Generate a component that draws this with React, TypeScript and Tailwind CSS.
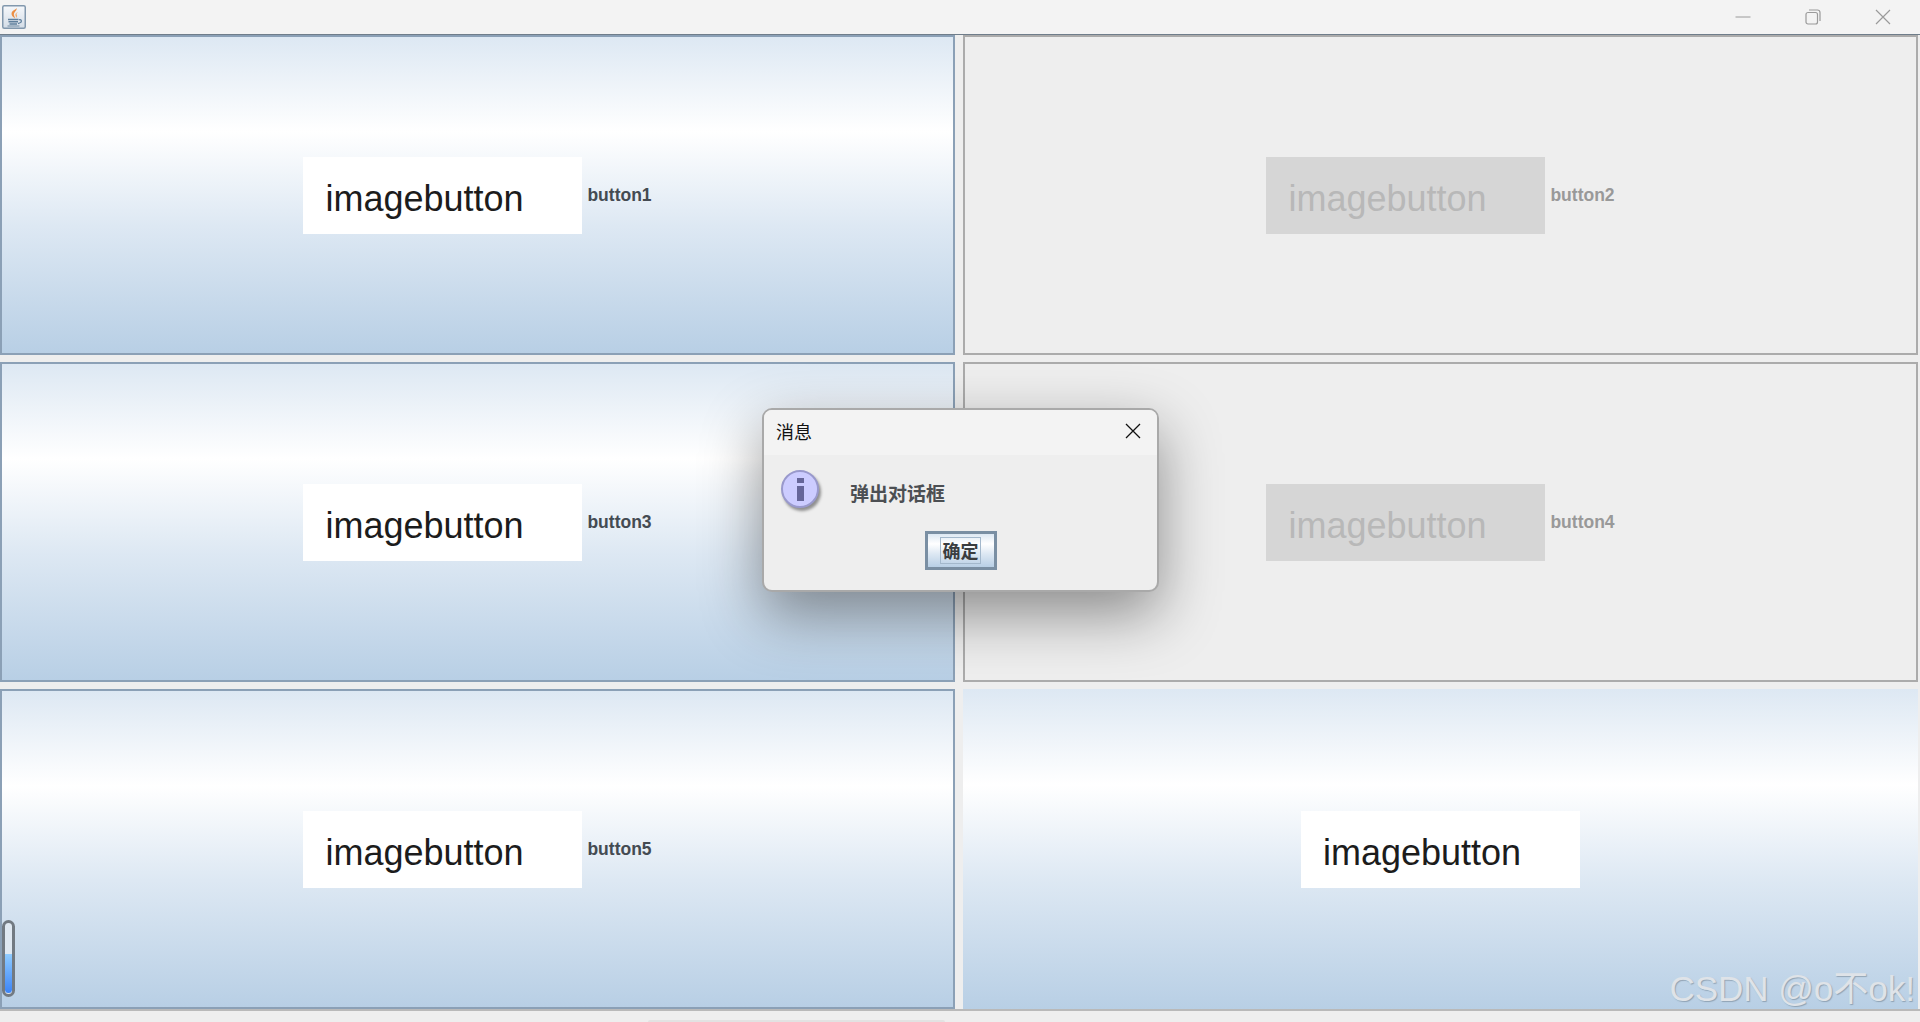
const CJK = "font-['Noto_Sans_CJK_SC',sans-serif]";

function JavaIcon() {
  return (
    <svg width="24" height="24" viewBox="0 0 24 24">
      <defs>
        <linearGradient id="frame" x1="0" y1="0" x2="0" y2="1">
          <stop offset="0" stopColor="#f6f8fb" />
          <stop offset="1" stopColor="#d3dce6" />
        </linearGradient>
      </defs>
      <rect x="0.75" y="0.75" width="22.5" height="22.5" rx="1.5" fill="url(#frame)" stroke="#8298ad" strokeWidth="1.5" />
      <path d="M14.500 3c1 2.800-3.600 4.400-2.400 7.400.3.900.7 1.800 1 3-3.400-1.800-4.400-4.600-2.800-6.800C11.500 5 14 4.800 14.500 3z" fill="#ec8f45" />
      <path d="M16 7c-2.200 1-3.200 2.200-2.400 3.800.3.700.5 1.400.4 2.200 1.400-1 1.400-2.400.7-3.400-.5-.9.300-1.600 1.300-2.600z" fill="#f2ab70" />
      <path d="M6 14.500h10.500M6.500 16.800h9.500M7.500 19h7.500" stroke="#5f7f9c" strokeWidth="1.400" fill="none" />
      <path d="M17 14.800c2.500-.6 3.500 1.800 1 3l-2 .8" stroke="#5f7f9c" strokeWidth="1.200" fill="none" />
      <path d="M5.500 21h12" stroke="#7f98ae" strokeWidth="1.200" />
    </svg>
  );
}

function WindowControls() {
  return (
    <div className="flex h-full items-center pr-[2px]">
      <div className="flex h-full w-[70px] items-center justify-center">
        <svg width="16" height="16" viewBox="0 0 16 16">
          <path d="M0.500 8h15" stroke="#9a9a9a" strokeWidth="1" />
        </svg>
      </div>
      <div className="flex h-full w-[70px] items-center justify-center">
        <svg width="16" height="16" viewBox="0 0 16 16" fill="none">
          <rect x="1" y="3.500" width="11.500" height="11.500" rx="2" stroke="#9a9a9a" strokeWidth="1.200" />
          <path d="M4 1h8.500A2.500 2.500 0 0 1 15 3.500V12" stroke="#9a9a9a" strokeWidth="1.200" />
        </svg>
      </div>
      <div className="flex h-full w-[70px] items-center justify-center">
        <svg width="16" height="16" viewBox="0 0 16 16">
          <path d="M1 1l14 14M15 1L1 15" stroke="#9a9a9a" strokeWidth="1.200" />
        </svg>
      </div>
    </div>
  );
}

function Cell({ label, disabled, bare }: { label?: string; disabled?: boolean; bare?: boolean }) {
  const surface = disabled
    ? "border-2 border-[#ababab] bg-[#eeeeee]"
    : bare
      ? "bg-[linear-gradient(180deg,#dde8f3_0%,#ffffff_30%,#dde8f3_60%,#b8cfe5_100%)]"
      : "border-2 border-[#8ba0b6] bg-[linear-gradient(180deg,#dde8f3_0%,#ffffff_30%,#dde8f3_60%,#b8cfe5_100%)]";

  return (
    <div className={`flex items-center justify-center gap-[5px] ${surface}`}>
      <div
        className={`flex h-[77px] w-[279px] items-center pl-[22px] pt-[8px] text-[36px] ${
          disabled ? "bg-[#d6d6d6] text-[#b8b8b8]" : "bg-white text-[#1c1c1c]"
        }`}
      >
        imagebutton
      </div>
      {label && (
        <span className={`mt-[1px] text-[17.500px] font-bold ${disabled ? "text-[#999999]" : "text-[#444b52]"}`}>{label}</span>
      )}
    </div>
  );
}

function InfoIcon() {
  return (
    <div className="flex h-[38px] w-[38px] items-center justify-center rounded-full border-2 border-[#9999cc] bg-[#ccccff] shadow-[2px_3px_3px_rgba(0,0,0,0.4)]">
      <div className="flex flex-col items-center gap-[3px]">
        <div className="h-[5px] w-[7px] bg-[#666699]" />
        <div className="h-[15px] w-[7px] bg-[#666699]" />
      </div>
    </div>
  );
}

function MessageDialog() {
  return (
    <div className="absolute left-[762px] top-[408px] flex h-[184px] w-[397px] flex-col rounded-[10px] border-2 border-[#a9a9a9] bg-[#eeeeee] shadow-[0_22px_60px_rgba(0,0,0,0.42)]">
      <div className={`flex h-[45px] shrink-0 items-center justify-between rounded-t-[8px] bg-[#f3f3f3] pb-[3px] pl-[12px] pr-[16px] text-[18px] text-[#111111] ${CJK}`}>
        <span>消息</span>
        <svg width="16" height="16" viewBox="0 0 16 16">
          <path d="M1 1l14 14M15 1L1 15" stroke="#111111" strokeWidth="1.300" />
        </svg>
      </div>
      <div className="flex items-center pl-[17px] pt-[15px]">
        <InfoIcon />
        <span className={`ml-[31px] mt-[8px] text-[19px] font-bold text-[#4c4f53] ${CJK}`}>弹出对话框</span>
      </div>
      <div className="flex justify-center pt-[23px]">
        <div className="flex h-[39px] w-[72px] items-center justify-center border-[3px] border-[#7a8fa3] bg-[linear-gradient(180deg,#dde8f3_0%,#ffffff_30%,#dde8f3_60%,#b8cfe5_100%)]">
          <span className={`flex h-[27px] w-[41px] items-center justify-center border border-[#a3b8cc] text-[18px] font-bold text-[#3a3d40] ${CJK}`}>确定</span>
        </div>
      </div>
    </div>
  );
}

export default function App() {
  return (
    <div className="relative flex h-[1022px] w-full flex-col overflow-hidden bg-[#eeeeee] font-['Liberation_Sans',sans-serif]">
      <div className="flex h-[35px] shrink-0 items-center justify-between border-b border-[#6f7d8a] bg-[#f3f3f3] pl-[2px]">
        <JavaIcon />
        <WindowControls />
      </div>
      <div className="grid h-[974px] shrink-0 grid-cols-[955px_955px] grid-rows-[320px_320px_320px] gap-x-[8px] gap-y-[7px]">
        <Cell label="button1" />
        <Cell label="button2" disabled />
        <Cell label="button3" />
        <Cell label="button4" disabled />
        <Cell label="button5" />
        <Cell bare />
      </div>
      <div className="flex-1 border-t-2 border-[#b9b9b9] pl-[648px] pt-[9px]">
        <div className="h-[2px] w-[297px] rounded-t-full bg-[#e2e2e2]" />
      </div>

      {/* things lying over the grid */}
      <div className="absolute left-[2px] top-[920px] h-[77px] w-[13px] overflow-hidden rounded-full border-[3px] border-[#727a82] bg-[#dfe8f1]">
        <div className="absolute bottom-[1px] left-0 right-0 h-[39px] rounded-b-full bg-[linear-gradient(180deg,#90ccff,#3c84f6)]" />
      </div>
      <MessageDialog />
      <div className="absolute bottom-[16px] right-[5px] font-['Liberation_Sans','Noto_Sans_CJK_SC',sans-serif] text-[35px] leading-none text-[#dfe3e8] [text-shadow:1px_1px_1px_rgba(110,125,140,0.55)]">
        CSDN @o不ok!
      </div>
    </div>
  );
}
